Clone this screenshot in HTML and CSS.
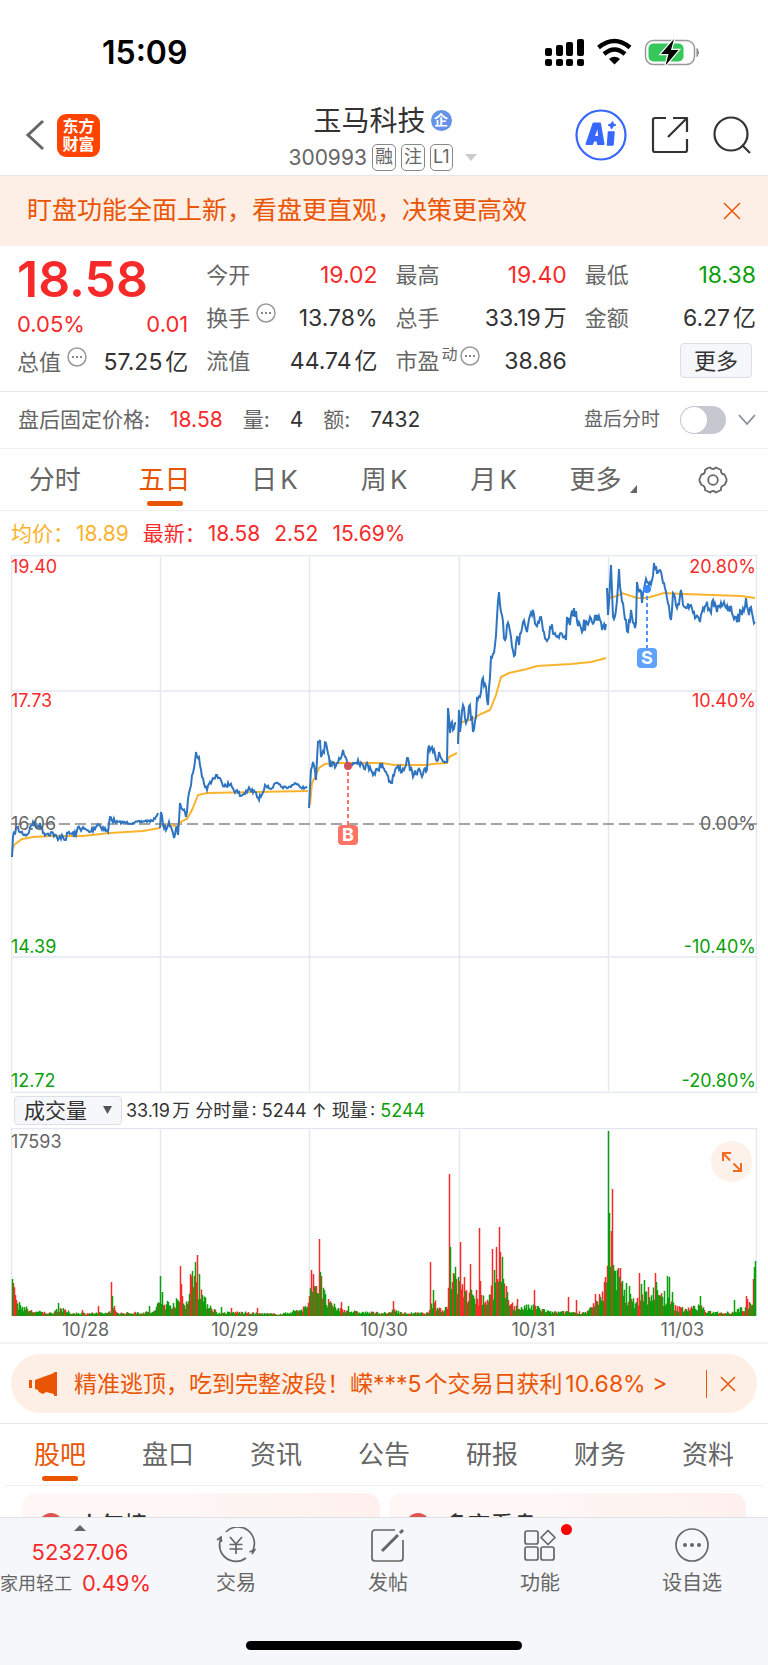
FILE: index.html
```html
<!DOCTYPE html>
<html lang="zh-CN">
<head>
    <meta charset="UTF-8">
    <meta name="viewport" content="width=device-width, initial-scale=1.0">
    <title>玉马科技 300993</title>
    <link rel="stylesheet" href="styles.css">
</head>
<body>
    <div class="app">
        <div class="status-bar">
            <span class="clock">15:09</span>
            <svg class="status-icons" width="158" height="30" viewBox="0 0 158 30">
                <g fill="#000">
                    <rect x="1" y="10" width="7" height="8" rx="2"/>
                    <rect x="12" y="7" width="7" height="11" rx="2"/>
                    <rect x="22" y="4" width="7" height="14" rx="2"/>
                    <rect x="33" y="1" width="7" height="17" rx="2"/>
                    <rect x="1" y="21" width="7" height="7" rx="2"/>
                    <rect x="12" y="21" width="7" height="7" rx="2"/>
                    <rect x="22" y="21" width="7" height="7" rx="2"/>
                    <rect x="33" y="21" width="7" height="7" rx="2"/>
                </g>
                <path d="M54.500 9.500Q70.500 -3.500 86 9.500" fill="none" stroke="#000" stroke-width="4.500"/>
                <path d="M60 16Q70.500 7 81 16" fill="none" stroke="#000" stroke-width="4.500"/>
                <path d="M65 21Q70.500 16.500 76 21L70.500 26.500Z" fill="#000"/>
                <rect x="101.500" y="2.500" width="49" height="24" rx="8" fill="none" stroke="#999" stroke-width="1.500"/>
                <path d="M153 10.500Q156 14.500 153 18.500Z" fill="#888" stroke="#888"/>
                <rect x="104.500" y="5.500" width="35" height="18" rx="5" fill="#34c759"/>
                <path d="M130 1L117 16H124.500L121.500 27.500L134.500 12H127Z" fill="#000" stroke="#fff" stroke-width="2.500" paint-order="stroke"/>
            </svg>
        </div>

        <header class="header">
            <div class="header-left">
                <button type="button" class="icon-btn" aria-label="返回">
                    <svg width="20" height="32" viewBox="0 0 20 32"><path d="M18 2L3 16L18 30" fill="none" stroke="#666" stroke-width="3"/></svg>
                </button>
                <div class="logo"><span>东方</span><span>财富</span></div>
            </div>
            <div class="title">
                <h1>玉马科技<span class="corp">企</span></h1>
                <div class="code">300993
                    <span class="tag">融</span><span class="tag">注</span><span class="tag">L1</span>
                    <button type="button" class="icon-btn caret" aria-label="切换股票">
                        <svg width="12" height="7" viewBox="0 0 12 7"><path d="M0 0H12L6 7Z" fill="#ccc"/></svg>
                    </button>
                </div>
            </div>
            <div class="header-right">
                <button type="button" class="icon-btn" aria-label="AI">
                    <svg width="52" height="52" viewBox="0 0 52 52">
                        <circle cx="26" cy="26" r="24.500" fill="none" stroke="#3768fb" stroke-width="2.200"/>
                        <path d="M11.500 35L18.500 14.500H25L28.500 35H23L22.500 31.500H18.500L17 35Z" fill="#3768fb" stroke="#3768fb" stroke-width="2" stroke-linejoin="round"/>
                        <path d="M20 27L22.500 20.500L23 27Z" fill="#fff"/>
                        <path d="M33.500 23H39L38 36H32.500Z" fill="#3768fb" stroke="#3768fb" stroke-width="1.500" stroke-linejoin="round"/>
                        <path d="M37.500 12.500Q38 15.500 41 16Q37.500 16.500 36.500 20Q36 16.500 33 16Q36.500 15.500 37.500 12.500Z" fill="#3768fb" stroke="#3768fb"/>
                    </svg>
                </button>
                <button type="button" class="icon-btn" aria-label="分享">
                    <svg width="38" height="38" viewBox="0 0 38 38" fill="none" stroke="#333" stroke-width="2.200" stroke-linejoin="round">
                        <path d="M15 2H4Q2 2 2 4V34Q2 36 4 36H34Q36 36 36 34V23"/>
                        <path d="M22 2H36V16M36 2L17 21"/>
                    </svg>
                </button>
                <button type="button" class="icon-btn" aria-label="搜索">
                    <svg width="38" height="38" viewBox="0 0 38 38" fill="none" stroke="#333" stroke-width="2.200">
                        <circle cx="18" cy="18" r="16.500"/>
                        <path d="M29 29L37 37"/>
                    </svg>
                </button>
            </div>
        </header>

        <div class="banner">
            <span>盯盘功能全面上新，看盘更直观，决策更高效</span>
            <button type="button" class="icon-btn" aria-label="关闭">
                <svg width="18" height="18" viewBox="0 0 18 18"><path d="M1 1L17 17M17 1L1 17" stroke="#ea5504" stroke-width="1.500"/></svg>
            </button>
        </div>

        <section class="quote">
            <div class="quote-col">
                <div class="price">18.58</div>
                <div class="change"><span>0.05%</span><span>0.01</span></div>
                <div class="row"><span class="label">总值<svg class="info" width="20" height="20" viewBox="0 0 20 20"><circle cx="10" cy="10" r="9" fill="none" stroke="#999" stroke-width="1.500"/><path d="M5 10h2M9 10h2M13 10h2" stroke="#888" stroke-width="2"/></svg></span><span>57.25亿</span></div>
            </div>
            <div class="quote-col">
                <div class="row"><span class="label">今开</span><span class="up">19.02</span></div>
                <div class="row"><span class="label">换手<svg class="info" width="20" height="20" viewBox="0 0 20 20"><circle cx="10" cy="10" r="9" fill="none" stroke="#999" stroke-width="1.500"/><path d="M5 10h2M9 10h2M13 10h2" stroke="#888" stroke-width="2"/></svg></span><span>13.78%</span></div>
                <div class="row"><span class="label">流值</span><span>44.74亿</span></div>
            </div>
            <div class="quote-col">
                <div class="row"><span class="label">最高</span><span class="up">19.40</span></div>
                <div class="row"><span class="label">总手</span><span>33.19万</span></div>
                <div class="row"><span class="label tight">市盈<small>动</small><svg class="info" width="20" height="20" viewBox="0 0 20 20"><circle cx="10" cy="10" r="9" fill="none" stroke="#999" stroke-width="1.500"/><path d="M5 10h2M9 10h2M13 10h2" stroke="#888" stroke-width="2"/></svg></span><span>38.86</span></div>
            </div>
            <div class="quote-col">
                <div class="row"><span class="label">最低</span><span class="down">18.38</span></div>
                <div class="row"><span class="label">金额</span><span>6.27亿</span></div>
                <div class="row end"><button type="button" class="more-btn">更多</button></div>
            </div>
        </section>

        <section class="after-hours">
            <span class="label">盘后固定价格:</span><span class="up">18.58</span>
            <span class="label">量:</span><span>4</span>
            <span class="label">额:</span><span>7432</span>
            <label class="switch-label" for="afterHours">盘后分时</label>
            <input type="checkbox" class="switch" id="afterHours">
            <button type="button" class="icon-btn" aria-label="展开">
                <svg width="20" height="14" viewBox="0 0 20 14"><path d="M2 2L10 11L18 2" fill="none" stroke="#888c96" stroke-width="1.800"/></svg>
            </button>
        </section>

        <nav class="chart-tabs">
            <button type="button">分时</button>
            <button type="button" class="active">五日</button>
            <button type="button">日K</button>
            <button type="button">周K</button>
            <button type="button">月K</button>
            <button type="button" class="more">更多<svg width="7" height="8" viewBox="0 0 7 8"><path d="M7 0V8H0Z" fill="#666"/></svg></button>
            <button type="button" class="gear" aria-label="设置">
                <svg width="30" height="28" viewBox="0 0 30 28" fill="none" stroke="#666" stroke-width="1.800" stroke-linejoin="round">
                    <path d="M10 2L12 1.500Q15 4.500 18 1.500L23 4Q22.500 8 26.500 8.500L28.500 13V15L26.500 19Q22.500 20 23 24L18 26.500Q15 23.500 12 26.500L7 24Q7.500 20 3.500 19L1.500 15V13L3.500 8.500Q7.500 8 7 4Z"/>
                    <circle cx="15" cy="14" r="4.800"/>
                </svg>
            </button>
        </nav>

        <div class="legend">
            <span class="avg">均价：</span><span class="avg">18.89</span>
            <span class="up latest">最新：</span><span class="up">18.58</span><span class="up">2.52</span><span class="up">15.69%</span>
        </div>

        <div class="chart">
            <svg class="plot" viewBox="0 0 746 538">
                <g class="grid">
                    <path class="frame" d="M0.500 0.500H745.500V537.500H0.500Z"/>
                    <path d="M149.500 2V536M298.500 2V536M448.500 2V536M597.500 2V536M0 136H746M0 402H746"/>
                </g>
                <path class="zero-line" d="M0 269H746"/>
                <g id="priceLines"></g>
                <g>
                    <path class="buy-line" d="M337 210V270"/>
                    <circle class="buy-dot" cx="337" cy="211" r="4"/>
                    <rect class="buy-mark" x="327" y="270" width="20" height="20" rx="4"/>
                    <text class="mark" x="337" y="286">B</text>
                    <path class="sell-line" d="M636 34V93"/>
                    <circle class="sell-dot" cx="636" cy="34" r="4"/>
                    <rect class="sell-mark" x="626" y="93" width="20" height="20" rx="4"/>
                    <text class="mark" x="636" y="109">S</text>
                </g>
                <g class="axis">
                    <text class="up" x="0" y="18">19.40</text>
                    <text class="up" x="0" y="152">17.73</text>
                    <text x="0" y="275">16.06</text>
                    <text class="down" x="0" y="398">14.39</text>
                    <text class="down" x="0" y="532">12.72</text>
                </g>
                <g class="axis right">
                    <text class="up" x="745" y="18">20.80%</text>
                    <text class="up" x="745" y="152">10.40%</text>
                    <text x="745" y="275">0.00%</text>
                    <text class="down" x="745" y="398">-10.40%</text>
                    <text class="down" x="745" y="532">-20.80%</text>
                </g>
            </svg>

            <div class="volume-bar">
                <div class="select-wrap">
                    <select aria-label="指标"><option>成交量</option></select>
                    <svg width="9" height="8" viewBox="0 0 9 8"><path d="M0 0H9L4.500 8Z" fill="#555"/></svg>
                </div>
                <span>33.19万 分时量: 5244 ↑ 现量: <span class="down">5244</span></span>
            </div>

            <div class="volume">
                <svg class="plot" viewBox="0 0 746 188">
                    <path class="frame" d="M0.500 0.500H745.500V187.500H0.500Z"/>
                    <path class="grid" d="M149.500 2V188M298.500 2V188M448.500 2V188M597.500 2V188"/>
                    <g id="volumeBars"></g>
                    <g class="axis"><text x="0" y="20">17593</text></g>
                </svg>
                <button type="button" class="expand" aria-label="全屏">
                    <svg width="22" height="22" viewBox="0 0 22 22" fill="none" stroke="#ef6c22" stroke-width="2"><path d="M2 10V2H10M2 2L9 9.500M20 12V20H12M20 20L12.500 12.500"/></svg>
                </button>
            </div>

            <div class="dates"><span>10/28</span><span>10/29</span><span>10/30</span><span>10/31</span><span>11/03</span></div>
        </div>

        <div class="notice-wrap">
            <div class="notice">
                <svg width="28" height="24" viewBox="0 0 28 24" fill="#ea5504"><path d="M0 8H3V16H0ZM6 8L25 1V0H28V24H25V22L17 20L14 22L10 20L9 18L6 17Z"/></svg>
                <a href="#">精准逃顶，吃到完整波段！嵘***5个交易日获利10.68% &gt;</a>
                <button type="button" class="icon-btn" aria-label="关闭">
                    <svg width="16" height="16" viewBox="0 0 16 16"><path d="M1 1L15 15M15 1L1 15" stroke="#ea5504" stroke-width="1.500"/></svg>
                </button>
            </div>
        </div>

        <nav class="section-tabs">
            <button type="button" class="active">股吧</button>
            <button type="button">盘口</button>
            <button type="button">资讯</button>
            <button type="button">公告</button>
            <button type="button">研报</button>
            <button type="button">财务</button>
            <button type="button">资料</button>
        </nav>

        <section class="cards">
            <div class="card"><i></i>人气榜</div>
            <div class="card"><i></i>多空看盘</div>
        </section>

        <footer class="bottom-bar">
            <div class="bottom-items">
                <div class="sector">
                    <svg width="12" height="6" viewBox="0 0 12 6"><path d="M0 6L6 0L12 6Z" fill="#666"/></svg>
                    <span class="index">52327.06</span>
                    <span class="sector-row"><small>家用轻工</small>0.49%</span>
                </div>
                <button type="button">
                    <svg width="40" height="36" viewBox="0 0 40 36" fill="none" stroke="#666" stroke-width="1.700">
                        <path d="M10 5A16.500 16.500 0 0 1 36 25M36 27L38.500 23L33.500 25"/>
                        <path d="M30 31A16.500 16.500 0 0 1 5 11M1 13L5 10L5.500 15"/>
                        <path d="M14 10L20 17L26 10M20 17V27M13.500 17.500H26.500M13.500 22H26.500"/>
                    </svg>
                    交易
                </button>
                <button type="button">
                    <svg width="36" height="36" viewBox="0 0 36 36" fill="none" stroke="#666" stroke-width="1.700">
                        <path d="M25 3H5Q2 3 2 6V31Q2 34 5 34H30Q33 34 33 31V13"/>
                        <path d="M12 24L28 8" stroke-width="3"/>
                        <path d="M30 6L33 3" stroke-width="3"/>
                    </svg>
                    发帖
                </button>
                <button type="button">
                    <svg width="36" height="36" viewBox="0 0 36 36" fill="none" stroke="#666" stroke-width="1.700" stroke-linejoin="round">
                        <rect x="3" y="4" width="13" height="13" rx="2"/>
                        <rect x="3" y="20" width="13" height="13" rx="2"/>
                        <rect x="19" y="20" width="13" height="13" rx="2"/>
                        <path d="M26 3.500L33 10.500L26 17.500L19 10.500Z"/>
                    </svg>
                    功能<i class="dot"></i>
                </button>
                <button type="button">
                    <svg width="36" height="36" viewBox="0 0 36 36"><circle cx="18" cy="18" r="16" fill="none" stroke="#666" stroke-width="1.700"/><g fill="#666"><circle cx="11" cy="18" r="2"/><circle cx="18" cy="18" r="2"/><circle cx="25" cy="18" r="2"/></g></svg>
                    设自选
                </button>
            </div>
            <div class="home-indicator"></div>
        </footer>
    </div>
    <script src="chart.js"></script>
</body>
</html>
```

FILE: styles.css
```css
* {
    box-sizing: border-box;
}
body {
    margin: 0;
    font-family: Inter, "Noto Sans CJK SC", sans-serif;
    font-size: 22px;
    text-autospace: normal;
    color: #333;
    background: #fff;
}
button {
    font-family: inherit;
    border: none;
    background: none;
    padding: 0;
    color: inherit;
    cursor: pointer;
}
svg {
    display: block;
    flex-shrink: 0;
}
.app {
    display: flex;
    flex-direction: column;
    height: 100vh;
}
.app > * {
    flex-shrink: 0;
}
.up {
    color: #f72a2a;
    fill: #f72a2a;
}
.down {
    color: #0a9f0a;
    fill: #0a9f0a;
}
.icon-btn {
    display: flex;
}

/* status bar */
.status-bar {
    display: flex;
    justify-content: space-between;
    align-items: center;
    height: 95px;
    padding: 10px 66px 0 102px;
}
.clock {
    font-size: 32px;
    font-weight: 600;
    color: #000;
}

/* header */
.header {
    display: grid;
    grid-template-columns: 1fr auto 1fr;
    align-items: center;
    height: 81px;
    padding: 0 17px 0 14px;
    border-bottom: 1px solid #e8e8ec;
}
.header-left {
    display: flex;
    align-items: center;
    gap: 12px;
    padding-left: 11px;
}
.logo {
    display: flex;
    flex-direction: column;
    justify-content: center;
    align-items: center;
    width: 43px;
    height: 43px;
    border-radius: 9px;
    background: #ff4400;
    color: #fff;
    font-size: 16px;
    line-height: 18px;
    font-weight: 700;
}
.title {
    padding-top: 5px;
}
.title h1 {
    display: flex;
    justify-content: center;
    align-items: center;
    gap: 5px;
    margin: 0;
    font-size: 28px;
    line-height: 40px;
    font-weight: 400;
}
.corp {
    width: 21px;
    height: 21px;
    border-radius: 50%;
    background: #6592e9;
    color: #fff;
    font-size: 14px;
    line-height: 20px;
    font-weight: 700;
    text-align: center;
}
.code {
    display: flex;
    justify-content: center;
    align-items: center;
    gap: 5px;
    font-size: 21px;
    line-height: 34px;
    color: #666;
}
.tag {
    height: 27px;
    padding: 0 2px;
    border: 1px solid #888;
    border-radius: 5px;
    font-size: 18px;
    line-height: 24px;
}
.caret {
    margin-left: 7px;
}
.header-right {
    display: flex;
    justify-content: flex-end;
    align-items: center;
    gap: 24px;
}

.banner {
    display: flex;
    justify-content: space-between;
    align-items: center;
    height: 70px;
    padding: 0 27px;
    background: #fdeee6;
    color: #ea5504;
    font-size: 25px;
    line-height: 34px;
}
.banner span {
    padding-bottom: 2px;
}

/* quote */
.quote {
    display: grid;
    grid-template-columns: repeat(4, 1fr);
    gap: 18px;
    height: 146px;
    padding: 7px 12px 0 17px;
    border-bottom: 1px solid #e8e8ec;
}
.price {
    margin: 2px 0 6px;
    font-size: 50px;
    line-height: 48px;
    font-weight: 600;
    color: #f72a2a;
}
.change {
    display: flex;
    justify-content: space-between;
    font-size: 22px;
    line-height: 31px;
    color: #f72a2a;
}
.row {
    display: flex;
    justify-content: space-between;
    align-items: center;
    height: 43px;
    font-size: 23px;
    line-height: 32px;
    white-space: nowrap;
}
.row.end {
    justify-content: flex-end;
}
.label {
    display: flex;
    gap: 6px;
    color: #666;
}
.row .label {
    font-size: 22px;
}
.label.tight {
    gap: 2px;
}
.label small {
    font-size: 16px;
    line-height: 18px;
}
.info {
    margin-top: 1px;
}
.more-btn {
    height: 35px;
    margin-right: 4px;
    padding: 0 13px;
    border: 1px solid #dcdfe6;
    border-radius: 4px;
    background: #f6f7fa;
    font-size: 22px;
    line-height: 30px;
}

.after-hours {
    display: flex;
    align-items: center;
    height: 57px;
    padding: 0 11px 0 18px;
    border-bottom: 1px solid #f0f0f4;
    font-size: 21px;
    line-height: 30px;
    text-autospace: no-autospace;
}
.after-hours > span {
    margin-right: 20px;
}
.switch-label {
    margin-left: auto;
    margin-right: 20px;
    font-size: 19px;
    color: #666;
}
.switch {
    appearance: none;
    display: flex;
    width: 46px;
    height: 28px;
    margin: 0 11px 0 0;
    padding: 1px;
    border-radius: 14px;
    background: #c5c8ce;
}
.switch::before {
    content: "";
    width: 26px;
    height: 26px;
    border-radius: 50%;
    background: #fff;
}
.switch:checked {
    justify-content: flex-end;
    background: #ea5504;
}

/* tabs */
.chart-tabs,
.section-tabs {
    display: grid;
    grid-template-columns: repeat(7, 1fr);
    height: 62px;
    border-bottom: 1px solid #eeeef2;
}
.chart-tabs button,
.section-tabs button {
    display: flex;
    flex-direction: column;
    align-items: center;
    justify-content: space-between;
    padding-top: 11px;
    font-size: 26px;
    line-height: 40px;
    color: #666;
}
.chart-tabs .active,
.section-tabs .active {
    color: #ea5504;
}
.active::after {
    content: "";
    width: 36px;
    height: 5px;
    margin-bottom: 4px;
    border-radius: 3px;
    background: #ea5504;
}
.chart-tabs .more {
    flex-direction: row;
    justify-content: center;
    align-items: flex-start;
    gap: 9px;
}
.more svg {
    margin-top: 25px;
}
.chart-tabs .gear {
    justify-content: center;
    padding-top: 0;
}

.legend {
    display: flex;
    align-items: center;
    gap: 14px;
    height: 44px;
    padding: 2px 11px 0;
    font-size: 21px;
    line-height: 30px;
}
.avg {
    color: #fbb32e;
}
.legend .avg:first-child,
.latest {
    margin-right: -12px;
}

/* charts */
.chart {
    padding: 0 11px;
    border-bottom: 2px solid #f2f2f5;
}
.plot {
    width: 100%;
    height: auto;
}
.grid,
.frame {
    fill: none;
    stroke: #e4e7ef;
    stroke-width: 1.5;
}
.zero-line {
    stroke: #888;
    stroke-width: 1.5;
    stroke-dasharray: 11 5;
}
.axis {
    font-size: 18px;
    fill: #666;
}
.right {
    text-anchor: end;
}
.price-line {
    fill: none;
    stroke: #2f74c0;
    stroke-width: 2;
}
.avg-line {
    fill: none;
    stroke: #fbb32e;
    stroke-width: 2;
}
.buy-line,
.sell-line {
    stroke: #ff7464;
    stroke-width: 2;
    stroke-dasharray: 4 3;
}
.sell-line {
    stroke: #4b93ff;
}
.buy-dot {
    fill: #d1515a;
}
.buy-mark {
    fill: #ff7464;
}
.sell-dot {
    fill: #3b87fa;
}
.sell-mark {
    fill: #60a3ff;
}
.mark {
    fill: #fff;
    font-size: 18px;
    font-weight: 700;
    text-anchor: middle;
}
.volume-bar {
    display: flex;
    align-items: center;
    gap: 4px;
    height: 35px;
    padding-left: 3px;
    font-size: 18px;
    line-height: 26px;
}
.select-wrap {
    position: relative;
}
.select-wrap select {
    appearance: none;
    display: block;
    width: 108px;
    height: 29px;
    padding: 0 9px;
    border: 1px solid #dcdfe6;
    border-radius: 4px;
    background: #f6f7fa;
    color: #333;
    font-family: inherit;
    font-size: 21px;
    line-height: 26px;
}
.select-wrap svg {
    position: absolute;
    right: 10px;
    top: 10px;
    pointer-events: none;
}
.volume {
    position: relative;
}
.bar-up,
.bar-down {
    stroke: #f72a2a;
    stroke-width: 1.5;
}
.bar-down {
    stroke: #0a9f0a;
}
.expand {
    position: absolute;
    top: 13px;
    right: 5px;
    display: flex;
    justify-content: center;
    align-items: center;
    width: 41px;
    height: 41px;
    border-radius: 50%;
    background: #fef1ea;
}
.dates {
    display: grid;
    grid-template-columns: repeat(5, 1fr);
    padding-top: 2px;
    font-size: 18px;
    line-height: 24px;
    text-align: center;
    color: #666;
}

.notice-wrap {
    padding: 10px 11px;
    border-bottom: 1px solid #e8e8ec;
}
.notice {
    display: flex;
    align-items: center;
    height: 59px;
    padding: 0 21px 0 18px;
    border-radius: 30px;
    background: #fdeee6;
}
.notice a {
    flex: 1;
    margin-left: 17px;
    color: #ea5504;
    font-size: 23px;
    line-height: 32px;
    text-decoration: none;
    white-space: nowrap;
}
.notice .icon-btn {
    padding: 6px 0 6px 13px;
    border-left: 1px solid #ea5504;
}

.section-tabs {
    margin: 0 6px;
}

.cards {
    display: flex;
    gap: 9px;
    flex: 1 1 0;
    min-height: 0;
    padding: 7px 22px 0;
    overflow: hidden;
}
.card {
    display: flex;
    align-items: center;
    gap: 15px;
    flex: 1;
    height: 62px;
    padding: 2px 0 0 17px;
    border-radius: 14px;
    background: linear-gradient(90deg, #fef7f5 45%, #fef0ee);
    font-size: 23px;
    line-height: 34px;
    font-weight: 500;
}
.card i {
    width: 24px;
    height: 24px;
    border-radius: 50%;
    background: #df5350;
}

/* bottom bar */
.bottom-bar {
    height: 148px;
    border-top: 1px solid #dfe1e6;
    background: #f6f7fa;
}
.bottom-items {
    display: grid;
    grid-template-columns: 160px repeat(4, 1fr);
    height: 123px;
}
.bottom-items button {
    position: relative;
    display: flex;
    flex-direction: column;
    align-items: center;
    gap: 4px;
    padding-top: 9px;
    font-size: 20px;
    line-height: 33px;
    color: #666;
}
.dot {
    position: absolute;
    top: 6px;
    left: 50%;
    width: 11px;
    height: 11px;
    margin-left: 21px;
    border-radius: 50%;
    background: #ff0000;
}
.sector {
    display: flex;
    flex-direction: column;
    align-items: center;
    padding-top: 7px;
    color: #f72a2a;
    white-space: nowrap;
}
.index {
    margin-top: 5px;
    line-height: 32px;
}
.sector-row {
    display: flex;
    align-items: center;
    gap: 10px;
    align-self: flex-start;
    line-height: 31px;
}
.sector-row small {
    font-size: 18px;
    color: #666;
}
.home-indicator {
    width: 36%;
    height: 9px;
    margin: 0 auto;
    border-radius: 5px;
    background: #000;
}
```

FILE: chart.js
```javascript
const SVG_NS = 'http://www.w3.org/2000/svg';

// one list of x,y pairs per trading day
const priceDays = [
    [1,302,2,282,6,272,9,277,16,280,22,267,26,273,29,268,32,278,42,278,47,285,51,280,54,285,57,278,65,280,67,272,79,277,87,269,97,277,99,262,104,267,122,268,134,266,142,266,147,258],
    [149,273,150,257,152,270,156,273,158,267,163,283,166,272,167,280,169,248,175,262,178,238,182,218,185,197,188,202,191,222,196,235,199,227,206,220,211,228,219,230,230,241,237,235,244,237,248,245,254,230,260,234,265,228,271,232,277,233,284,228,289,232,296,233],
    [298,253,300,215,302,207,305,225,307,187,309,185,310,202,315,188,319,212,326,208,332,195,337,210,342,208,347,205,352,210,359,212,363,218,367,215,371,208,375,217,380,228,385,213,393,215,396,203,402,222,407,215,410,219,416,215,417,195,421,192,426,206,428,197,430,203,436,207,437,153,439,178,441,167,442,175,445,168],
    [447,189,448,155,449,177,452,150,455,168,459,150,462,177,465,162,466,142,470,137,472,123,475,132,477,150,480,102,484,90,486,62,488,37,490,57,494,85,496,70,500,82,504,100,506,82,508,90,512,67,516,77,522,55,525,70,530,62,536,86,540,73,546,82,555,85,556,62,559,70,563,53,566,66,570,73,576,68,581,67,586,60,590,67,591,75,595,69],
    [596,33,597,60,600,10,602,62,605,55,608,14,610,38,613,57,617,77,620,55,624,73,625,68,626,27,629,35,631,48,633,35,636,27,641,25,643,8,646,18,649,15,653,28,656,43,660,65,662,38,666,53,670,35,672,50,678,53,683,57,689,67,695,50,700,58,702,45,706,57,713,47,718,53,725,62,731,60,735,43,738,60,740,52,742,63,744,67]
];
const noise = [3, 3, 4, 6, 6];

const avgDays = [
    [1,296,3,290,11,284,22,282,39,281,72,281,99,278,132,276,149,273],
    [150,270,159,269,166,272,171,266,176,264,181,255,187,240,196,238,297,236],
    [299,250,301,228,304,222,308,213,314,209,322,208,371,208,383,210,416,210,421,209,436,208,438,202,446,198],
    [447,185,449,168,461,164,470,159,479,155,485,140,490,122,498,118,516,114,526,111,560,109,580,107,595,103],
    [596,35,598,43,606,41,611,38,626,43,636,43,653,38,673,39,730,41,744,43]
];

// typical bar height along the x axis
const volumeProfile = [1,30,6,12,20,5,40,3,47,8,60,3,95,3,101,7,108,3,142,4,148,14,152,12,165,14,175,14,180,34,189,32,192,16,200,10,206,3,225,4,240,3,270,2,290,7,297,12,300,28,311,26,316,13,328,7,345,4,378,3,383,7,390,3,417,3,422,14,430,6,436,10,438,45,448,30,456,22,475,16,482,32,491,32,497,16,505,9,525,9,538,4,575,4,590,18,595,35,598,65,604,42,612,26,622,14,640,24,655,18,665,8,680,8,690,10,695,4,720,4,735,9,741,20,744,45];

// positive = up, negative = down
const spikes = {
    1: -37, 2: 33, 4: 21, 5: 16, 47: -13, 49: 8, 71: 6, 87: 10, 100: 34, 101: -20, 103: 10, 138: -10,
    149: -40, 151: -24, 169: 50, 170: 32, 171: 20, 179: 42, 181: -45, 183: 40, 184: -54, 186: 61, 188: -42,
    210: -9, 220: 8, 246: 8, 300: 46, 302: 42, 303: 30, 305: 30, 308: 77, 309: -44, 310: 40, 317: 17,
    330: 14, 337: -10, 382: 15, 419: 54, 422: -26, 438: 142, 439: -69, 442: 43, 444: -49, 447: -39,
    449: 74, 453: 39, 459: 52, 465: 26, 468: 88, 469: 35, 481: 67, 483: -46, 485: 69, 488: 89, 489: 64,
    491: -59, 495: 30, 506: 17, 523: 26, 557: 19, 565: 16, 584: 22, 588: 22, 594: 39, 597: -185, 598: -103,
    600: 85, 601: 127, 602: -51, 604: -45, 607: 48, 609: 48, 615: -33, 618: -30, 628: 43, 630: -32, 633: -36,
    637: 29, 644: 43, 645: -34, 653: -25, 656: -40, 658: -39, 661: -24, 689: -20, 723: -16, 735: 20, 736: 17,
    742: 37, 743: -49, 744: -55
};

let seed = 7;
function random() {
    seed = (seed * 16807) % 2147483647;
    return seed / 2147483647;
}

function valueAt(pairs, x) {
    for (let i = 0; i < pairs.length - 2; i += 2) {
        if (x <= pairs[i + 2]) {
            const t = (x - pairs[i]) / (pairs[i + 2] - pairs[i]);
            return pairs[i + 1] + (pairs[i + 3] - pairs[i + 1]) * t;
        }
    }
    return pairs[pairs.length - 1];
}

function addPath(parent, className, d) {
    const path = document.createElementNS(SVG_NS, 'path');
    path.setAttribute('class', className);
    path.setAttribute('d', d);
    parent.appendChild(path);
}

function drawPrice() {
    const group = document.getElementById('priceLines');
    avgDays.forEach(day => addPath(group, 'avg-line', 'M' + day.join(' ')));
    priceDays.forEach((day, n) => {
        const points = [];
        for (let i = 0; i < day.length; i += 2) {
            points.push(day[i], day[i + 1]);
            // wiggle between two known points
            for (let x = day[i] + 1; x < day[i + 2]; x++) {
                const calm = (n === 0 && x > 104) || (n === 1 && x > 254) ? 0.4 : 1;
                const y = valueAt(day, x) + (random() - 0.5) * 2 * noise[n] * calm;
                points.push(x, y.toFixed(1));
            }
        }
        addPath(group, 'price-line', 'M' + points.join(' '));
    });
}

function drawVolume() {
    const group = document.getElementById('volumeBars');
    let up = '';
    let down = '';
    for (let x = 1; x < 745; x++) {
        let height = Math.max(1, valueAt(volumeProfile, x) * (0.5 + random() * 0.8));
        let isUp = random() < 0.35;
        if (spikes[x]) {
            height = Math.abs(spikes[x]);
            isUp = spikes[x] > 0;
        }
        const bar = `M${x + 0.5} 188v-${height.toFixed(1)}`;
        if (isUp) up += bar;
        else down += bar;
    }
    addPath(group, 'bar-up', up);
    addPath(group, 'bar-down', down);
}

drawPrice();
drawVolume();
```
